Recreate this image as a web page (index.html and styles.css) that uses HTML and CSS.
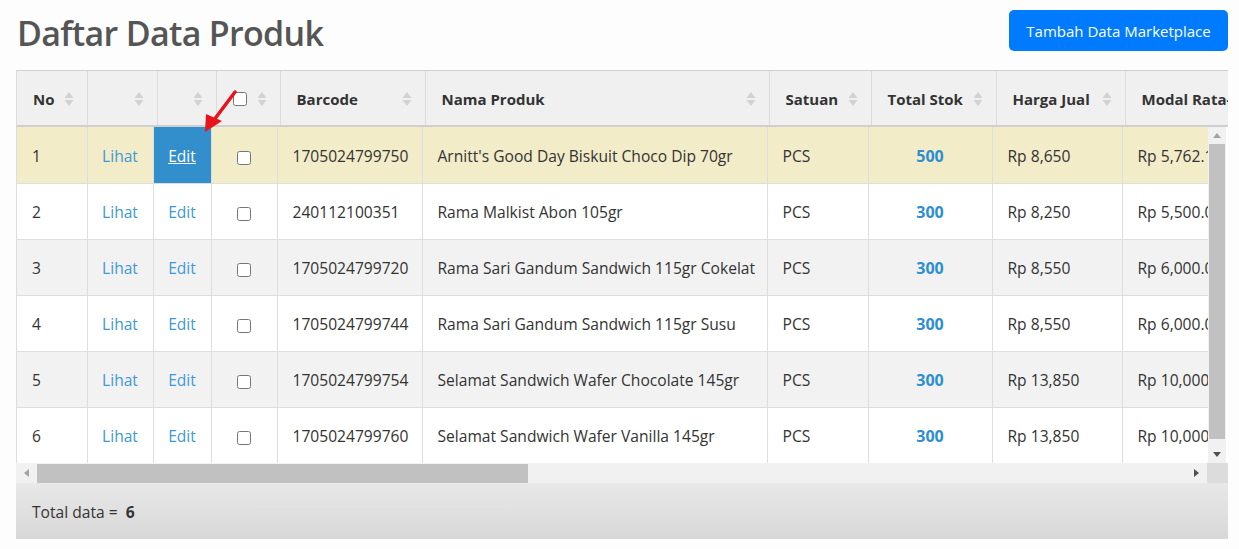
FILE: index.html
```html
<!DOCTYPE html>
<html lang="id">
<head>
<meta charset="utf-8">
<title>Daftar Data Produk</title>
<link rel="stylesheet" href="styles.css">
</head>
<body>
<div class="page">
  <div class="top">
    <h1 class="title">Daftar Data Produk</h1>
    <button class="btn">Tambah Data Marketplace</button>
  </div>

  <div class="grid">
    <div class="head-clip">
      <table class="thead">
        <colgroup>
          <col class="h1c"><col class="h2c"><col class="h3c"><col class="h4c"><col class="h5c"><col class="h6c"><col class="h7c"><col class="h8c"><col class="h9c"><col class="h10c">
        </colgroup>
        <tr>
          <th><span class="th-in">No<svg class="sort" viewBox="0 0 10 16"><path d="M5 1 L9.5 7 L0.5 7 Z M5 15 L9.5 9 L0.5 9 Z"/></svg></span></th>
          <th><span class="th-in"><svg class="sort" viewBox="0 0 10 16"><path d="M5 1 L9.5 7 L0.5 7 Z M5 15 L9.5 9 L0.5 9 Z"/></svg></span></th>
          <th><span class="th-in"><svg class="sort" viewBox="0 0 10 16"><path d="M5 1 L9.5 7 L0.5 7 Z M5 15 L9.5 9 L0.5 9 Z"/></svg></span></th>
          <th><span class="th-in th-check"><input type="checkbox" class="cb"><svg class="sort" viewBox="0 0 10 16"><path d="M5 1 L9.5 7 L0.5 7 Z M5 15 L9.5 9 L0.5 9 Z"/></svg></span></th>
          <th><span class="th-in">Barcode<svg class="sort" viewBox="0 0 10 16"><path d="M5 1 L9.5 7 L0.5 7 Z M5 15 L9.5 9 L0.5 9 Z"/></svg></span></th>
          <th><span class="th-in">Nama Produk<svg class="sort" viewBox="0 0 10 16"><path d="M5 1 L9.5 7 L0.5 7 Z M5 15 L9.5 9 L0.5 9 Z"/></svg></span></th>
          <th><span class="th-in">Satuan<svg class="sort" viewBox="0 0 10 16"><path d="M5 1 L9.5 7 L0.5 7 Z M5 15 L9.5 9 L0.5 9 Z"/></svg></span></th>
          <th><span class="th-in">Total Stok<svg class="sort" viewBox="0 0 10 16"><path d="M5 1 L9.5 7 L0.5 7 Z M5 15 L9.5 9 L0.5 9 Z"/></svg></span></th>
          <th><span class="th-in">Harga Jual<svg class="sort" viewBox="0 0 10 16"><path d="M5 1 L9.5 7 L0.5 7 Z M5 15 L9.5 9 L0.5 9 Z"/></svg></span></th>
          <th><span class="th-in">Modal Rata-rata<svg class="sort" viewBox="0 0 10 16"><path d="M5 1 L9.5 7 L0.5 7 Z M5 15 L9.5 9 L0.5 9 Z"/></svg></span></th>
        </tr>
      </table>
    </div>

    <div class="body-row">
      <div class="body-clip">
        <table class="tbody">
          <colgroup>
            <col class="b1c"><col class="b2c"><col class="b3c"><col class="b4c"><col class="b5c"><col class="b6c"><col class="b7c"><col class="b8c"><col class="b9c"><col class="b10c">
          </colgroup>
          <tr class="sel">
            <td>1</td><td class="c"><a class="lnk">Lihat</a></td><td class="c edit-on"><a class="lnk-on">Edit</a></td><td class="c"><input type="checkbox" class="cb"></td>
            <td>1705024799750</td><td>Arnitt's Good Day Biskuit Choco Dip 70gr</td><td>PCS</td><td class="c stok">500</td><td>Rp 8,650</td><td>Rp 5,762.16</td>
          </tr>
          <tr>
            <td>2</td><td class="c"><a class="lnk">Lihat</a></td><td class="c"><a class="lnk">Edit</a></td><td class="c"><input type="checkbox" class="cb"></td>
            <td>240112100351</td><td>Rama Malkist Abon 105gr</td><td>PCS</td><td class="c stok">300</td><td>Rp 8,250</td><td>Rp 5,500.00</td>
          </tr>
          <tr class="alt">
            <td>3</td><td class="c"><a class="lnk">Lihat</a></td><td class="c"><a class="lnk">Edit</a></td><td class="c"><input type="checkbox" class="cb"></td>
            <td>1705024799720</td><td>Rama Sari Gandum Sandwich 115gr Cokelat</td><td>PCS</td><td class="c stok">300</td><td>Rp 8,550</td><td>Rp 6,000.00</td>
          </tr>
          <tr>
            <td>4</td><td class="c"><a class="lnk">Lihat</a></td><td class="c"><a class="lnk">Edit</a></td><td class="c"><input type="checkbox" class="cb"></td>
            <td>1705024799744</td><td>Rama Sari Gandum Sandwich 115gr Susu</td><td>PCS</td><td class="c stok">300</td><td>Rp 8,550</td><td>Rp 6,000.00</td>
          </tr>
          <tr class="alt">
            <td>5</td><td class="c"><a class="lnk">Lihat</a></td><td class="c"><a class="lnk">Edit</a></td><td class="c"><input type="checkbox" class="cb"></td>
            <td>1705024799754</td><td>Selamat Sandwich Wafer Chocolate 145gr</td><td>PCS</td><td class="c stok">300</td><td>Rp 13,850</td><td>Rp 10,000.00</td>
          </tr>
          <tr>
            <td>6</td><td class="c"><a class="lnk">Lihat</a></td><td class="c"><a class="lnk">Edit</a></td><td class="c"><input type="checkbox" class="cb"></td>
            <td>1705024799760</td><td>Selamat Sandwich Wafer Vanilla 145gr</td><td>PCS</td><td class="c stok">300</td><td>Rp 13,850</td><td>Rp 10,000.00</td>
          </tr>
        </table>
      </div>
      <div class="vscroll">
        <div class="sb-btn"><svg viewBox="0 0 8 5" class="arr dim"><path d="M4 0 L8 5 L0 5 Z"/></svg></div>
        <div class="v-thumb"></div>
        <div class="v-rest"></div>
        <div class="sb-btn"><svg viewBox="0 0 8 5" class="arr"><path d="M0 0 L8 0 L4 5 Z"/></svg></div>
      </div>
      <div class="edge"></div>
    </div>

    <div class="hscroll-row">
      <div class="hscroll">
        <div class="sb-hbtn"><svg viewBox="0 0 5 8" class="harr dim"><path d="M5 0 L5 8 L0 4 Z"/></svg></div>
        <div class="h-thumb"></div>
        <div class="h-rest"></div>
        <div class="sb-hbtn"><svg viewBox="0 0 5 8" class="harr"><path d="M0 0 L5 4 L0 8 Z"/></svg></div>
      </div>
      <div class="corner"></div>
    </div>

    <div class="footer">Total data =&nbsp; <b>6</b></div>
  </div>

  <svg class="pointer" width="50" height="60" viewBox="0 0 50 60">
    <path d="M37 3 L16 31" stroke="#e8141b" stroke-width="3.5" stroke-linecap="round" fill="none"/>
    <path d="M7 43 L8 25 L24 32 Z" fill="#e8141b"/>
  </svg>
</div>
</body>
</html>
```

FILE: styles.css
```css
* { box-sizing: border-box; }

body {
  margin: 0;
  background: #fdfdfd;
  font-family: "Open Sans", "Noto Sans", sans-serif;
  color: #333;
}

.page {
  position: relative;
  width: 1239px;
  padding: 0 11px 0 16px;
}

.top {
  display: flex;
  justify-content: space-between;
  align-items: flex-start;
  height: 70px;
}

.title {
  margin: 12px 0 0 1px;
  font-size: 34px;
  line-height: 43px;
  font-weight: 600;
  color: #555;
  letter-spacing: -0.7px;
}

.btn {
  margin-top: 10px;
  width: 219px;
  height: 41px;
  border: none;
  border-radius: 5px;
  background: #007bff;
  color: #fff;
  font-family: "Open Sans", "Noto Sans", sans-serif;
  font-size: 15px;
  padding: 0;
}

.grid {
  width: 1212px;
}

.head-clip {
  overflow: hidden;
  border-top: 1px solid #cfcfcf;
  border-left: 1px solid #ddd;
  border-bottom: 2px solid #cfcfcf;
  background: #f0f0f0;
}

table {
  border-collapse: collapse;
  table-layout: fixed;
}

.thead { width: 1260px; }
.h1c { width: 70px; }
.h2c { width: 70px; }
.h3c { width: 59px; }
.h4c { width: 64px; }
.h5c { width: 145px; }
.h6c { width: 344px; }
.h7c { width: 102px; }
.h8c { width: 125px; }
.h9c { width: 129px; }
.h10c { width: 152px; }

.thead th {
  height: 54px;
  padding: 2px 13px 0 16px;
  border-right: 1px solid #dcdcdc;
  text-align: left;
  font-size: 15px;
  font-weight: 700;
  color: #333;
  white-space: nowrap;
  overflow: hidden;
}

.th-in {
  display: flex;
  align-items: center;
  justify-content: space-between;
}

.th-in .sort { margin-left: auto; }

.th-check {
  justify-content: flex-start;
}
.th-check .cb { margin: 0 0 0 0; }

.sort {
  width: 10px;
  height: 16px;
  flex: none;
  fill: #d2d2d2;
}

.body-row {
  display: flex;
  height: 336px;
}

.body-clip {
  width: 1192px;
  overflow: hidden;
  border-left: 1px solid #ddd;
}

.tbody { width: 1250px; }
.b1c { width: 70px; }
.b2c { width: 66px; }
.b3c { width: 58px; }
.b4c { width: 66px; }
.b5c { width: 145px; }
.b6c { width: 345px; }
.b7c { width: 101px; }
.b8c { width: 124px; }
.b9c { width: 130px; }
.b10c { width: 145px; }

.tbody td {
  height: 56px;
  padding: 2px 0 0 15px;
  border-right: 1px solid #dedede;
  border-bottom: 1px solid #dedede;
  font-size: 15.6px;
  white-space: nowrap;
  overflow: hidden;
  color: #333;
}

.tbody tr { background: #fff; }
.tbody tr.alt { background: #f2f2f2; }
.tbody tr.sel { background: #f2ecc9; }

.tbody td.c {
  text-align: center;
  padding: 2px 0 0;
}

.lnk { color: #3d9ad6; }
.edit-on { background: #328fcc; }
.lnk-on { color: #fff; text-decoration: underline; }

.stok {
  color: #2b8fd2 !important;
  font-weight: 700;
  font-size: 16px !important;
}

.cb {
  width: 14px;
  height: 14px;
  margin: 0;
  vertical-align: middle;
}

.vscroll {
  width: 18px;
  display: flex;
  flex-direction: column;
  background: #f1f1f1;
}

.edge { width: 2px; background: #fff; }

.sb-btn {
  height: 17px;
  display: flex;
  align-items: center;
  justify-content: center;
  flex: none;
}

.arr { width: 8px; height: 5px; fill: #505050; }
.arr.dim, .harr.dim { fill: #a3a3a3; }

.v-thumb {
  height: 295px;
  margin: 0 1px;
  background: #c1c1c1;
  flex: none;
}

.v-rest { flex: 1; }

.hscroll-row {
  display: flex;
  height: 20px;
}

.hscroll {
  flex: 1;
  display: flex;
  background: #f1f1f1;
}

.sb-hbtn {
  width: 21px;
  display: flex;
  align-items: center;
  justify-content: center;
  flex: none;
}

.harr { width: 5px; height: 8px; fill: #505050; }

.h-thumb {
  width: 491px;
  margin: 1px 0 0;
  background: #c1c1c1;
}

.h-rest { flex: 1; }

.corner {
  width: 21px;
  background: #dcdcdc;
}

.footer {
  height: 56px;
  padding: 2px 0 0 16px;
  display: flex;
  align-items: center;
  background: linear-gradient(#e8e8e8, #d8d8d8);
  font-size: 15.6px;
  color: #333;
}

.footer b { margin-left: 4px; font-weight: 700; }

.pointer {
  position: absolute;
  left: 198px;
  top: 89px;
}
```
